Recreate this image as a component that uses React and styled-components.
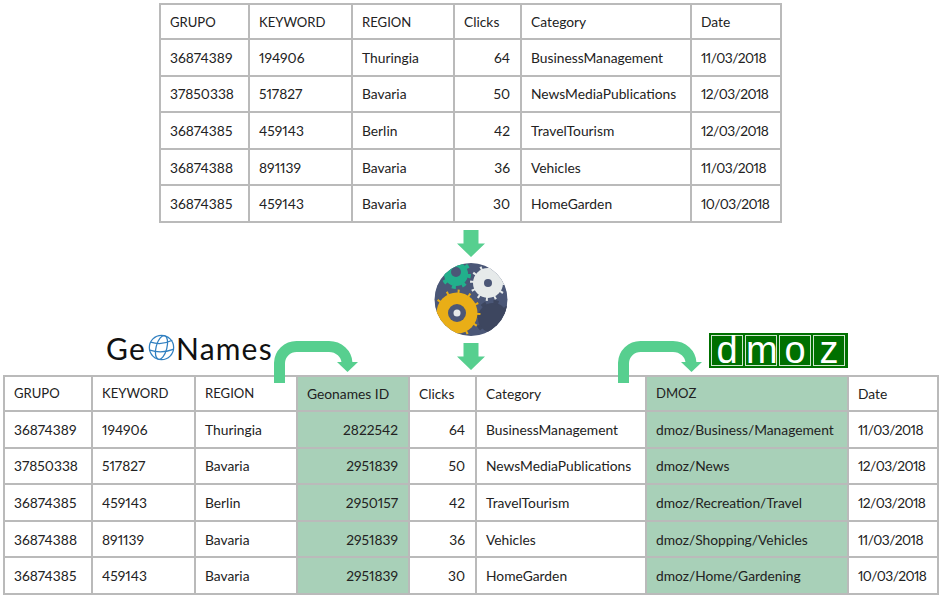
import React from 'react'
import styled, { createGlobalStyle } from 'styled-components'

const GlobalStyle = createGlobalStyle`
  html, body { margin: 0; padding: 0; background: #fff; }
  body { font-family: "Lato", "Liberation Sans", sans-serif; color: #222; }
`

const topColumns = [
  { key: 'grupo', label: 'GRUPO', width: 89, caps: true },
  { key: 'keyword', label: 'KEYWORD', width: 103, caps: true },
  { key: 'region', label: 'REGION', width: 102, caps: true },
  { key: 'clicks', label: 'Clicks', width: 67, numeric: true },
  { key: 'category', label: 'Category', width: 170 },
  { key: 'date', label: 'Date', width: 90, tight: true },
]

const bottomColumns = [
  { key: 'grupo', label: 'GRUPO', width: 88, caps: true },
  { key: 'keyword', label: 'KEYWORD', width: 103, caps: true },
  { key: 'region', label: 'REGION', width: 102, caps: true },
  { key: 'geo', label: 'Geonames ID', width: 112, numeric: true, enriched: true },
  { key: 'clicks', label: 'Clicks', width: 67, numeric: true },
  { key: 'category', label: 'Category', width: 170 },
  { key: 'dmoz', label: 'DMOZ', width: 202, enriched: true, caps: true },
  { key: 'date', label: 'Date', width: 90, tight: true },
]

const topRows = [
  { grupo: '36874389', keyword: '194906', region: 'Thuringia', clicks: 64, category: 'BusinessManagement', date: '11/03/2018' },
  { grupo: '37850338', keyword: '517827', region: 'Bavaria', clicks: 50, category: 'NewsMediaPublications', date: '12/03/2018' },
  { grupo: '36874385', keyword: '459143', region: 'Berlin', clicks: 42, category: 'TravelTourism', date: '12/03/2018' },
  { grupo: '36874388', keyword: '891139', region: 'Bavaria', clicks: 36, category: 'Vehicles', date: '11/03/2018' },
  { grupo: '36874385', keyword: '459143', region: 'Bavaria', clicks: 30, category: 'HomeGarden', date: '10/03/2018' },
]

const extras = [
  { geo: 2822542, dmoz: 'dmoz/Business/Management' },
  { geo: 2951839, dmoz: 'dmoz/News' },
  { geo: 2950157, dmoz: 'dmoz/Recreation/Travel' },
  { geo: 2951839, dmoz: 'dmoz/Shopping/Vehicles' },
  { geo: 2951839, dmoz: 'dmoz/Home/Gardening' },
]

const bottomRows = topRows.map((row, i) => ({ ...row, ...extras[i] }))

const Page = styled.div`
  width: 939px;
  height: 600px;
  overflow: hidden;
  padding-top: 3px;
  box-sizing: border-box;
  display: flex;
  flex-direction: column;
`

const Table = styled.table`
  border-collapse: collapse;
  table-layout: fixed;
  width: ${(p) => p.$width}px;
  margin-left: ${(p) => p.$left}px;
  font-size: 13.8px;
  font-variant-numeric: proportional-nums;
  flex: none;
`

const Cell = styled.td`
  height: ${(p) => (p.$head ? '35px' : '36.6px')};
  padding: 0 10px 0 9px;
  box-sizing: border-box;
  border: 2px solid #bababa;
  white-space: nowrap;
  text-align: ${(p) => (p.$numeric ? 'right' : 'left')};
  background: ${(p) => (p.$enriched ? '#a8d0b8' : 'transparent')};
  font-size: ${(p) => (p.$caps ? '13.1px' : 'inherit')};
  letter-spacing: ${(p) => (p.$tight ? '-0.6px' : 'normal')};
`

const Middle = styled.div`
  height: 152px;
  flex: none;
  display: grid;
  grid-template-columns: 106px 252px 226px 355px;
`

const Pipeline = styled.div`
  grid-column: 3;
  padding-top: 7px;
  display: flex;
  flex-direction: column;
  align-items: center;
`

const GeoBlock = styled.div`
  grid-column: 2;
  align-self: end;
  display: flex;
  align-items: flex-end;
`

const DmozBlock = styled.div`
  grid-column: 4;
  align-self: end;
  padding-left: 34px;
  display: flex;
  align-items: flex-end;
`

const GeoLogo = styled.div`
  width: 169px;
  display: flex;
  align-items: center;
  font-size: 30px;
  letter-spacing: 1.2px;
  color: #111;
  line-height: 36px;
  margin-bottom: 9px;
`

const DmozLogo = styled.div`
  display: flex;
  gap: 2px;
  padding: 2px 3px 2px 2px;
  background: #007000;
  margin-bottom: 7px;
  margin-left: 7px;
`

const DmozLetter = styled.span`
  width: 32px;
  height: 31px;
  box-sizing: border-box;
  border: 1px solid #cfe6cf;
  color: #fff;
  font-size: 38px;
  line-height: 28px;
  text-align: center;
  font-family: "Liberation Sans", sans-serif;
`

const CurveWrap = styled.div`
  flex: none;
  position: relative;
  z-index: 1;
  margin-bottom: -8px;
`

const DownArrow = () => (
  <svg width="28" height="27" viewBox="0 0 28 27" style={{ display: 'block' }}>
    <path d="M6.5 0H21.5V13.5H28L14 27L0 13.5H6.5Z" fill="#57cf8f" />
  </svg>
)

const CurveArrow = () => (
  <CurveWrap>
    <svg width="84" height="43" viewBox="0 0 84 43" style={{ display: 'block' }}>
      <path d="M5.5 43V23A17 17 0 0 1 22.5 6.5H55A18 17 0 0 1 73 23" fill="none" stroke="#57cf8f" strokeWidth="11" />
      <path d="M63 22H84L73.5 32Z" fill="#57cf8f" />
    </svg>
  </CurveWrap>
)

const Globe = () => (
  <svg width="27" height="27" viewBox="0 0 30 30" style={{ margin: '0 1px 0 2px' }}>
    <g fill="none" stroke="#2f7fc0" strokeWidth="1.4">
      <circle cx="15" cy="15" r="13.5" />
      <ellipse cx="15" cy="15" rx="6" ry="13.5" transform="rotate(15 15 15)" />
      <path d="M3 9Q15 13 27 7M2 18Q15 22 28 17" />
    </g>
  </svg>
)

// cog drawn as a disc with a dashed ring for its small teeth
const Cog = ({ x, y, r, teeth, fill, toothWidth = 2 }) => {
  const ring = r + 1
  const step = (2 * Math.PI * ring) / teeth
  return (
    <g>
      <circle cx={x} cy={y} r={r} fill={fill} />
      <circle
        cx={x}
        cy={y}
        r={ring}
        fill="none"
        stroke={fill}
        strokeWidth="4"
        strokeDasharray={`${toothWidth} ${step - toothWidth}`}
      />
    </g>
  )
}

const Gears = () => (
  <svg width="74" height="73" viewBox="0 0 74 73" style={{ display: 'block', margin: '6px 0 7px' }}>
    <defs>
      <clipPath id="gearsBall">
        <circle cx="37" cy="36.5" r="36.5" />
      </clipPath>
    </defs>
    <g clipPath="url(#gearsBall)">
      <circle cx="37" cy="36.5" r="37" fill="#4b5777" />
      <Cog x={59} y={55} r={15} teeth={8} fill="#3d465f" toothWidth={5} />
      <Cog x={22} y={11} r={12} teeth={8} fill="#22b08c" toothWidth={4} />
      <circle cx="22" cy="9" r="5" fill="#4b5777" />
      <Cog x={54} y={20} r={15} teeth={12} fill="#e6eaea" />
      <circle cx="54" cy="20" r="4" fill="#4b5777" />
      <Cog x={23} y={50} r={20.5} teeth={12} fill="#e9ae17" />
      <circle cx="23" cy="50" r="9" fill="#4b5777" />
      <circle cx="23" cy="50" r="3.5" fill="#e6eaea" />
    </g>
  </svg>
)

const DataTable = ({ columns, rows, left }) => (
  <Table $width={columns.reduce((sum, c) => sum + c.width, 0)} $left={left}>
    <colgroup>
      {columns.map((c) => (
        <col key={c.key} style={{ width: c.width }} />
      ))}
    </colgroup>
    <tbody>
      <tr>
        {columns.map((c) => (
          <Cell key={c.key} $head $enriched={c.enriched} $caps={c.caps}>{c.label}</Cell>
        ))}
      </tr>
      {rows.map((row, i) => (
        <tr key={i}>
          {columns.map((c) => (
            <Cell key={c.key} $numeric={c.numeric} $enriched={c.enriched} $tight={c.tight}>{row[c.key]}</Cell>
          ))}
        </tr>
      ))}
    </tbody>
  </Table>
)

export default function App() {
  return (
    <Page>
      <GlobalStyle />
      <DataTable columns={topColumns} rows={topRows} left={159} />
      <Middle>
        <GeoBlock>
          <GeoLogo>Ge<Globe />Names</GeoLogo>
          <CurveArrow />
        </GeoBlock>
        <Pipeline>
          <DownArrow />
          <Gears />
          <DownArrow />
        </Pipeline>
        <DmozBlock>
          <CurveArrow />
          <DmozLogo>
            {['d', 'm', 'o', 'z'].map((l) => (
              <DmozLetter key={l}>{l}</DmozLetter>
            ))}
          </DmozLogo>
        </DmozBlock>
      </Middle>
      <DataTable columns={bottomColumns} rows={bottomRows} left={3} />
    </Page>
  )
}
